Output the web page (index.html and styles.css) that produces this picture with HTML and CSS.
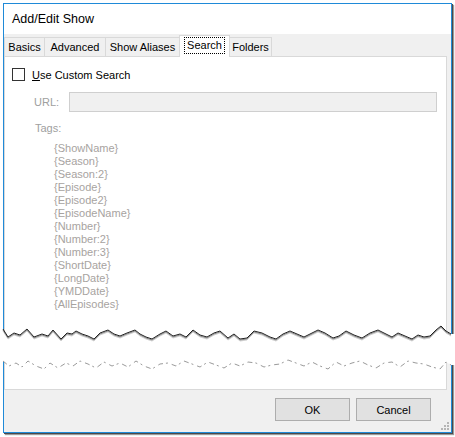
FILE: index.html
```html
<!DOCTYPE html>
<html>
<head>
<meta charset="utf-8">
<link rel="stylesheet" href="styles.css">
</head>
<body>
<div class="window">
  <div class="titlebar">Add/Edit Show</div>
  <div class="client">
    <div class="tabs">
      <div class="tab w-basics">Basics</div>
      <div class="tab w-adv">Advanced</div>
      <div class="tab w-alias">Show Aliases</div>
      <div class="tab active w-search"><span class="focus">Search</span></div>
      <div class="tab w-folders">Folders</div>
    </div>
    <div class="panel">
      <div class="check"><span class="box"></span><span><u>U</u>se Custom Search</span></div>
      <div class="url-row"><span class="lbl">URL:</span><div class="input"></div></div>
      <div class="tags-label">Tags:</div>
      <ul class="tags">
        <li>{ShowName}</li>
        <li>{Season}</li>
        <li>{Season:2}</li>
        <li>{Episode}</li>
        <li>{Episode2}</li>
        <li>{EpisodeName}</li>
        <li>{Number}</li>
        <li>{Number:2}</li>
        <li>{Number:3}</li>
        <li>{ShortDate}</li>
        <li>{LongDate}</li>
        <li>{YMDDate}</li>
        <li>{AllEpisodes}</li>
      </ul>
    </div>
    <div class="footer">
      <button class="btn">OK</button>
      <button class="btn">Cancel</button>
      <svg class="grip" width="10" height="10" viewBox="0 0 10 10">
        <rect x="7" y="1" width="2" height="2" fill="#b5b5b5"/>
        <rect x="4" y="4" width="2" height="2" fill="#b5b5b5"/>
        <rect x="7" y="4" width="2" height="2" fill="#b5b5b5"/>
        <rect x="1" y="7" width="2" height="2" fill="#b5b5b5"/>
        <rect x="4" y="7" width="2" height="2" fill="#b5b5b5"/>
        <rect x="7" y="7" width="2" height="2" fill="#b5b5b5"/>
      </svg>
    </div>
  </div>
  <svg class="tear" width="455" height="60" viewBox="0 320 455 60">
    <polygon fill="#ffffff" points="0,330 3,329 8,337 14,333 20,335 27,329 34,337 42,334 48,336 53,330 61,339 67,333 72,334 76,331 82,334 88,336 94,339 100,333 108,330 114,334 120,336 127,333 135,330 140,334 146,337 152,339 160,334 166,331 173,336 180,334 186,337 193,330 200,335 207,337 214,333 220,331 228,338 234,334 240,339 247,338 254,331 262,333 270,337 276,339 283,334 290,331 297,334 304,337 310,334 318,330 325,333 333,338 339,336 346,331 354,335 362,338 370,333 378,330 386,334 392,337 398,333 405,336 412,339 418,335 424,337 430,336 436,330 441,326 446,331 451,334 455,334 455,365 451,365 446,362 440,369 432,367 424,364 416,363 408,361 400,367 392,362 384,363 376,368 368,365 360,361 352,363 344,366 336,362 328,369 320,366 312,362 304,366 296,363 288,360 280,364 272,365 264,367 256,363 248,362 240,366 232,363 224,368 216,365 208,362 200,367 192,364 184,361 176,366 168,363 160,364 152,369 144,366 136,361 128,367 120,363 112,366 104,362 96,368 88,364 80,361 73,366 66,363 58,368 50,363 44,369 36,366 28,361 22,367 16,363 9,366 3,361 0,362"/>
    <polyline fill="none" stroke="#d0d0d0" stroke-width="1" transform="translate(0,2)" points="3,329 8,337 14,333 20,335 27,329 34,337 42,334 48,336 53,330 61,339 67,333 72,334 76,331 82,334 88,336 94,339 100,333 108,330 114,334 120,336 127,333 135,330 140,334 146,337 152,339 160,334 166,331 173,336 180,334 186,337 193,330 200,335 207,337 214,333 220,331 228,338 234,334 240,339 247,338 254,331 262,333 270,337 276,339 283,334 290,331 297,334 304,337 310,334 318,330 325,333 333,338 339,336 346,331 354,335 362,338 370,333 378,330 386,334 392,337 398,333 405,336 412,339 418,335 424,337 430,336 436,330 441,326 446,331 451,334"/>
    <polyline fill="none" stroke="#8a8a8a" stroke-width="1" transform="translate(0,1)" points="3,329 8,337 14,333 20,335 27,329 34,337 42,334 48,336 53,330 61,339 67,333 72,334 76,331 82,334 88,336 94,339 100,333 108,330 114,334 120,336 127,333 135,330 140,334 146,337 152,339 160,334 166,331 173,336 180,334 186,337 193,330 200,335 207,337 214,333 220,331 228,338 234,334 240,339 247,338 254,331 262,333 270,337 276,339 283,334 290,331 297,334 304,337 310,334 318,330 325,333 333,338 339,336 346,331 354,335 362,338 370,333 378,330 386,334 392,337 398,333 405,336 412,339 418,335 424,337 430,336 436,330 441,326 446,331 451,334"/>
    <polyline fill="none" stroke="#222222" stroke-width="1" points="3,329 8,337 14,333 20,335 27,329 34,337 42,334 48,336 53,330 61,339 67,333 72,334 76,331 82,334 88,336 94,339 100,333 108,330 114,334 120,336 127,333 135,330 140,334 146,337 152,339 160,334 166,331 173,336 180,334 186,337 193,330 200,335 207,337 214,333 220,331 228,338 234,334 240,339 247,338 254,331 262,333 270,337 276,339 283,334 290,331 297,334 304,337 310,334 318,330 325,333 333,338 339,336 346,331 354,335 362,338 370,333 378,330 386,334 392,337 398,333 405,336 412,339 418,335 424,337 430,336 436,330 441,326 446,331 451,334"/>
    <polyline fill="none" stroke="#9a9a9a" stroke-width="1" stroke-dasharray="5 3 2 4" points="3,361 9,366 16,363 22,367 28,361 36,366 44,369 50,363 58,368 66,363 73,366 80,361 88,364 96,368 104,362 112,366 120,363 128,367 136,361 144,366 152,369 160,364 168,363 176,366 184,361 192,364 200,367 208,362 216,365 224,368 232,363 240,366 248,362 256,363 264,367 272,365 280,364 288,360 296,363 304,366 312,362 320,366 328,369 336,362 344,366 352,363 360,361 368,365 376,368 384,363 392,362 400,367 408,361 416,363 424,364 432,367 440,369 446,362 451,365"/>
  </svg>
</div>
</body>
</html>
```

FILE: styles.css
```css
* { box-sizing: border-box; }

html, body {
  margin: 0;
  padding: 0;
  background: #ffffff;
}

body {
  width: 455px;
  height: 437px;
  overflow: hidden;
  font-family: "Liberation Sans", Arial, sans-serif;
  font-size: 11px;
  color: #000;
}

.window {
  position: relative;
  margin: 3px 0 0 3px;
  width: 449px;
  height: 430px;
  border: 1px solid #1f8ad8;
  box-shadow: 1px 1px 0 #4a4a4a, 2px 2px 1px #9a9a9a;
  background: #f0f0f0;
  display: flex;
  flex-direction: column;
}

.titlebar {
  height: 30px;
  line-height: 30px;
  padding-left: 8px;
  background: #ffffff;
  font-size: 12.5px;
  color: #000;
}

.client {
  flex: 1;
  display: flex;
  flex-direction: column;
  background: #f0f0f0;
}

.tabs {
  display: flex;
  align-items: flex-end;
  height: 22px;
  padding-top: 3px;
  position: relative;
  z-index: 2;
}

.tab {
  height: 19px;
  line-height: 18px;
  border: 1px solid #d9d9d9;
  border-bottom: none;
  margin-right: -1px;
  text-align: center;
  background: #f0f0f0;
  white-space: nowrap;
}

.w-basics { width: 41px; }
.w-adv { width: 62px; }
.w-alias { width: 75px; }
.w-search { width: 51px; }
.w-folders { width: 43px; }

.tab.active {
  height: 22px;
  margin-bottom: -1px;
  margin-right: -1px;
  background: #ffffff;
  line-height: 17px;
  padding-top: 1px;
}

.focus {
  display: inline-block;
  border: 1px dotted #000;
  line-height: 15px;
  padding: 0 2px;
}

.panel {
  position: relative;
  z-index: 1;
  width: 443px;
  height: 334px;
  border: 1px solid #d9d9d9;
  background: #ffffff;
  padding: 11px 0 0 7px;
}

.check {
  display: flex;
  align-items: center;
  height: 13px;
  gap: 7px;
}

.box {
  width: 13px;
  height: 13px;
  border: 1px solid #333333;
  background: #fff;
}

.url-row {
  display: flex;
  align-items: center;
  margin-top: 11px;
  padding-left: 22px;
  height: 20px;
}

.lbl {
  width: 35px;
  color: #a0a0a0;
}

.input {
  width: 368px;
  height: 20px;
  border: 1px solid #cfcfcf;
  background: #f0f0f0;
}

.tags-label {
  margin-top: 10px;
  padding-left: 23px;
  line-height: 13px;
  color: #a0a0a0;
}

.tags {
  list-style: none;
  margin: 7px 0 0 0;
  padding: 0 0 0 42px;
  color: #a7a39f;
  line-height: 13px;
}

.footer {
  position: relative;
  flex: 1;
  display: flex;
  justify-content: flex-end;
  align-items: flex-start;
  padding: 8px 20px 0 0;
  gap: 6px;
}

.btn {
  width: 75px;
  height: 23px;
  border: 1px solid #adadad;
  background: #e1e1e1;
  font-family: "Liberation Sans", Arial, sans-serif;
  font-size: 11px;
  color: #000;
  padding: 0;
}

.grip {
  position: absolute;
  right: 1px;
  bottom: 1px;
}

.tear {
  position: absolute;
  left: -4px;
  top: 316px;
  z-index: 5;
}
```
